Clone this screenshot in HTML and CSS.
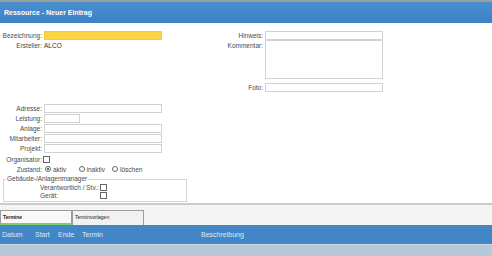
FILE: index.html
```html
<!DOCTYPE html>
<html lang="de">
<head>
  <meta charset="UTF-8">
  <title>Ressource - Neuer Eintrag</title>
  <link rel="stylesheet" href="styles.css">
</head>
<body>

<div class="header">Ressource - Neuer Eintrag</div>

<div class="top">
  <div class="col">
    <div class="row">
      <span class="lbl">Bezeichnung:</span>
      <span class="field required"></span>
    </div>
    <div class="row">
      <span class="lbl">Ersteller:</span>
      <span class="value">ALCO</span>
    </div>
  </div>

  <div class="col">
    <div class="row short">
      <span class="lbl wide">Hinweis:</span>
      <span class="field"></span>
    </div>
    <div class="row tall">
      <span class="lbl wide">Kommentar:</span>
      <span class="field area"></span>
    </div>
    <div class="row foto">
      <span class="lbl wide">Foto:</span>
      <span class="field"></span>
    </div>
  </div>
</div>

<div class="lower">
  <div class="row">
    <span class="lbl">Adresse:</span>
    <span class="field"></span>
  </div>
  <div class="row">
    <span class="lbl">Leistung:</span>
    <span class="field small"></span>
  </div>
  <div class="row">
    <span class="lbl">Anlage:</span>
    <span class="field"></span>
  </div>
  <div class="row">
    <span class="lbl">Mitarbeiter:</span>
    <span class="field"></span>
  </div>
  <div class="row">
    <span class="lbl">Projekt:</span>
    <span class="field"></span>
  </div>
  <div class="row mid">
    <span class="lbl">Organisator:</span>
    <span class="check"></span>
  </div>
  <div class="row mid">
    <span class="lbl">Zustand:</span>
    <span class="choice"><span class="radio on"></span>aktiv</span>
    <span class="choice"><span class="radio"></span>inaktiv</span>
    <span class="choice"><span class="radio"></span>löschen</span>
  </div>

  <fieldset class="group">
    <legend>Gebäude-/Anlagenmanager</legend>
    <div class="grow">
      <span class="glbl">Verantwortlich / Stv.:</span>
      <span class="check"></span>
    </div>
    <div class="grow">
      <span class="glbl">Gerät:</span>
      <span class="check"></span>
    </div>
  </fieldset>
</div>

<div class="tabbar">
  <div class="tab active">Termine</div>
  <div class="tab">Terminvorlagen</div>
</div>

<div class="thead">
  <span class="c-datum">Datum</span>
  <span class="c-start">Start</span>
  <span class="c-ende">Ende</span>
  <span class="c-termin">Termin</span>
  <span class="c-beschr">Beschreibung</span>
</div>
<div class="tbody"></div>

</body>
</html>
```

FILE: styles.css
```css
body {
  margin: 0;
  font-family: 'Liberation Sans', Arial, sans-serif;
  font-size: 6.5px;
  color: #4a4a4a;
  background: #fff;
  overflow: hidden;
}

.header {
  height: 21px;
  border-top: 2px solid #97a19c;
  background: linear-gradient(#4a8ecf, #3c82c4);
  color: #fff;
  font-weight: bold;
  font-size: 7px;
  line-height: 21px;
  padding-left: 4px;
}

.top {
  display: grid;
  grid-template-columns: 210px 1fr;
  margin-top: 8px;
}

.row {
  display: flex;
  align-items: flex-start;
  height: 10px;
  line-height: 9px;
}

.row.short {
  height: 9px;
}

.row.tall {
  height: 39px;
}

.row.tall .lbl {
  padding-top: 1px;
}

.row.foto {
  margin-top: 4px;
}

.row.mid {
  align-items: center;
}

.lbl {
  width: 44px;
  box-sizing: border-box;
  padding-right: 2px;
  text-align: right;
  flex-shrink: 0;
}

.lbl.wide {
  width: 55px;
}

.value {
  color: #333;
}

.field {
  width: 118px;
  height: 9px;
  box-sizing: border-box;
  border: 1px solid #d2d2d2;
  background: #fff;
}

.field.required {
  background: #fdd444;
  border-color: #f2cc3e;
}

.field.small {
  width: 36px;
}

.field.area {
  height: 39px;
}

.lower {
  margin-top: 11px;
}

.check {
  width: 7px;
  height: 7px;
  box-sizing: border-box;
  border: 1px solid #666;
  background: #fff;
  margin-left: -1px;
}

.choice {
  display: flex;
  align-items: center;
  width: 33.5px;
  flex-shrink: 0;
}

.radio {
  width: 6px;
  height: 6px;
  box-sizing: border-box;
  border: 1px solid #666;
  border-radius: 50%;
  margin: 0 2px 0 1px;
  position: relative;
}

.radio.on::after {
  content: '';
  position: absolute;
  left: 1px;
  top: 1px;
  width: 2px;
  height: 2px;
  border-radius: 50%;
  background: #333;
}

.group {
  width: 184px;
  box-sizing: border-box;
  margin: 1px 0 0 3px;
  padding: 0 0 2px 0;
  border: 1px solid #d4d4d4;
}

.group legend {
  padding: 0 1px;
  margin-left: 2px;
  line-height: 8px;
}

.grow {
  display: flex;
  align-items: center;
  height: 8px;
  padding-left: 36px;
}

.glbl {
  width: 61px;
}

.tabbar {
  margin-top: 1px;
  border-top: 2px solid #cbcbcb;
  background: #f4f4f4;
  height: 20px;
  display: flex;
  align-items: flex-end;
}

.tab {
  width: 72px;
  height: 15px;
  box-sizing: border-box;
  border: 1px solid #9c9c9c;
  border-bottom: none;
  background: #f1f1f1;
  font-size: 5px;
  color: #222;
  padding: 3px 0 0 2px;
}

.tab.active {
  background: #f8f8f8;
  border-bottom: 2px solid #7ccf6f;
  font-weight: bold;
}

.thead {
  height: 19px;
  background: #4286c6;
  color: #dfeaf6;
  font-size: 7px;
  line-height: 19px;
  display: flex;
}

.thead span {
  flex-shrink: 0;
}

.c-datum { padding-left: 2px; width: 33px; }
.c-start { width: 23px; }
.c-ende { width: 24px; }
.c-termin { width: 119px; }

.tbody {
  height: 13px;
  background: #b7c9d6;
  border-top: 1px solid #c9d8e2;
}
```
